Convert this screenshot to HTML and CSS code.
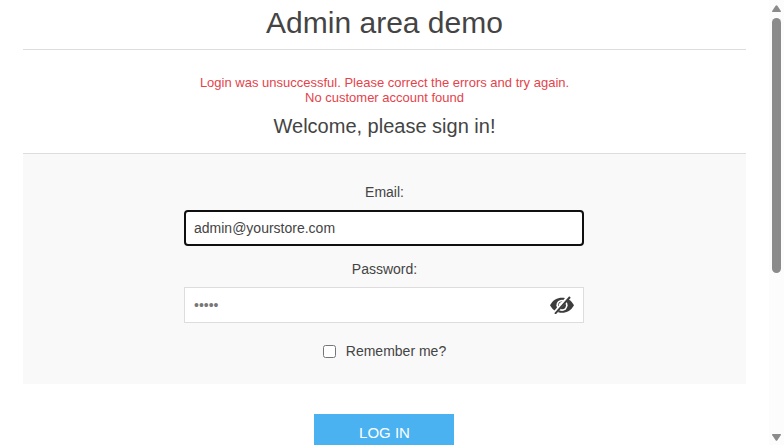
FILE: index.html
```html
<!DOCTYPE html>
<html lang="en">
<head>
<meta charset="utf-8">
<title>Admin area demo</title>
<link rel="stylesheet" href="styles.css">
</head>
<body>
<div class="window">
<main class="page">
<h1 class="title">Admin area demo</h1>
<p class="error">Login was unsuccessful. Please correct the errors and try again.<br>No customer account found</p>
<h2 class="welcome">Welcome, please sign in!</h2>
<form>
<section class="panel">
<label class="label" for="email">Email:</label>
<div class="field active"><input id="email" type="text" value="admin@yourstore.com"></div>
<label class="label second" for="password">Password:</label>
<div class="field"><input id="password" type="text" value="•••••" class="secret">
<svg class="eye" viewBox="0 0 24 18"><path d="M0 9.3C3 4 7 1.8 12 1.8S21 4 24 9.3C21 14.6 17 16.8 12 16.8S3 14.6 0 9.3Z" fill="#3c3c3c"/><circle cx="12" cy="9.3" r="5.6" fill="#fff"/><circle cx="12" cy="9.3" r="3.9" fill="#3c3c3c"/><path d="M12 6.6A2.7 2.7 0 0 0 9.3 9.3" fill="none" stroke="#fff" stroke-width="1.2"/><path d="M19 0 4 17.8" stroke="#fff" stroke-width="3.6"/><path d="M20 1 5 17.8" stroke="#3c3c3c" stroke-width="2"/></svg></div>
<label class="remember"><input type="checkbox"><span>Remember me?</span></label>
</section>
<button class="login" type="button">LOG IN</button>
</form>
</main>
<div class="scrollbar">
<svg class="arrow" viewBox="0 0 9 7"><path d="M.4 7Q-.2 6.6.3 5.8L3.6.8Q4.5-.4 5.4.8L8.7 5.8Q9.2 6.6 8.6 7Z" fill="#8b8b8b"/></svg>
<i class="thumb"></i>
<svg class="arrow down" viewBox="0 0 9 7"><path d="M.4 0Q-.2.4.3 1.2L3.6 6.2Q4.5 7.4 5.4 6.2L8.7 1.2Q9.2.4 8.6 0Z" fill="#8b8b8b"/></svg>
</div>
</div>
</body>
</html>
```
FILE: styles.css
```css
* { box-sizing: border-box; }
body { margin: 0; overflow: hidden; font: 14px/16px "Liberation Sans", Arial, sans-serif; color: #444; background: #fff; }
.window { display: flex; height: 445px; overflow: hidden; }
.page { width: 723px; margin-left: 23px; flex: none; text-align: center; }
.title { height: 50px; margin: 0; border-bottom: 1px solid #ddd; font-size: 30px; font-weight: 400; line-height: 46px; }
.error { margin: 25px 0 0; font-size: 13px; line-height: 15px; color: #e4434b; }
.welcome { margin: 9px 0 0; height: 40px; font-size: 20px; font-weight: 400; line-height: 24px; border-bottom: 1px solid #ddd; }
.panel { height: 230px; padding-top: 30px; background: #f9f9f9; display: flex; flex-direction: column; align-items: center; }
.label { line-height: 16px; height: 26px; }
.second { margin-top: 15px; }
.field { width: 400px; height: 36px; margin-right: 1px; border: 1px solid #ddd; background: #fff; display: flex; align-items: center; padding: 0 9px 0 9px; }
.active { border: 2px solid #101010; border-radius: 4px; padding: 0 8px; }
.field input { flex: 1; min-width: 0; border: 0; padding: 0; outline: 0; background: none; font: inherit; color: #444; }
.field .secret { color: #777; }
.eye { width: 24px; height: 18px; }
.remember { display: flex; align-items: center; gap: 10px; margin-top: 20px; height: 16px; }
.remember input { width: 13px; height: 13px; margin: 0; }
.login { display: block; width: 140px; height: 36px; margin: 30px 0 0 291px; padding: 1px 0 0 1px; border: 0; background: #4ab2f1; color: #fff; font: 15px/36px "Liberation Sans", Arial, sans-serif; }
.scrollbar { width: 15px; margin-left: 23px; flex: none; display: flex; flex-direction: column; align-items: center; background: #fcfcfc; }
.arrow { width: 9px; height: 7px; margin-top: 5px; flex: none; }
.thumb { width: 9px; height: 255px; margin-top: 6px; border-radius: 5px; background: #8b8b8b; }
.down { margin: auto 0 4px; }
```
